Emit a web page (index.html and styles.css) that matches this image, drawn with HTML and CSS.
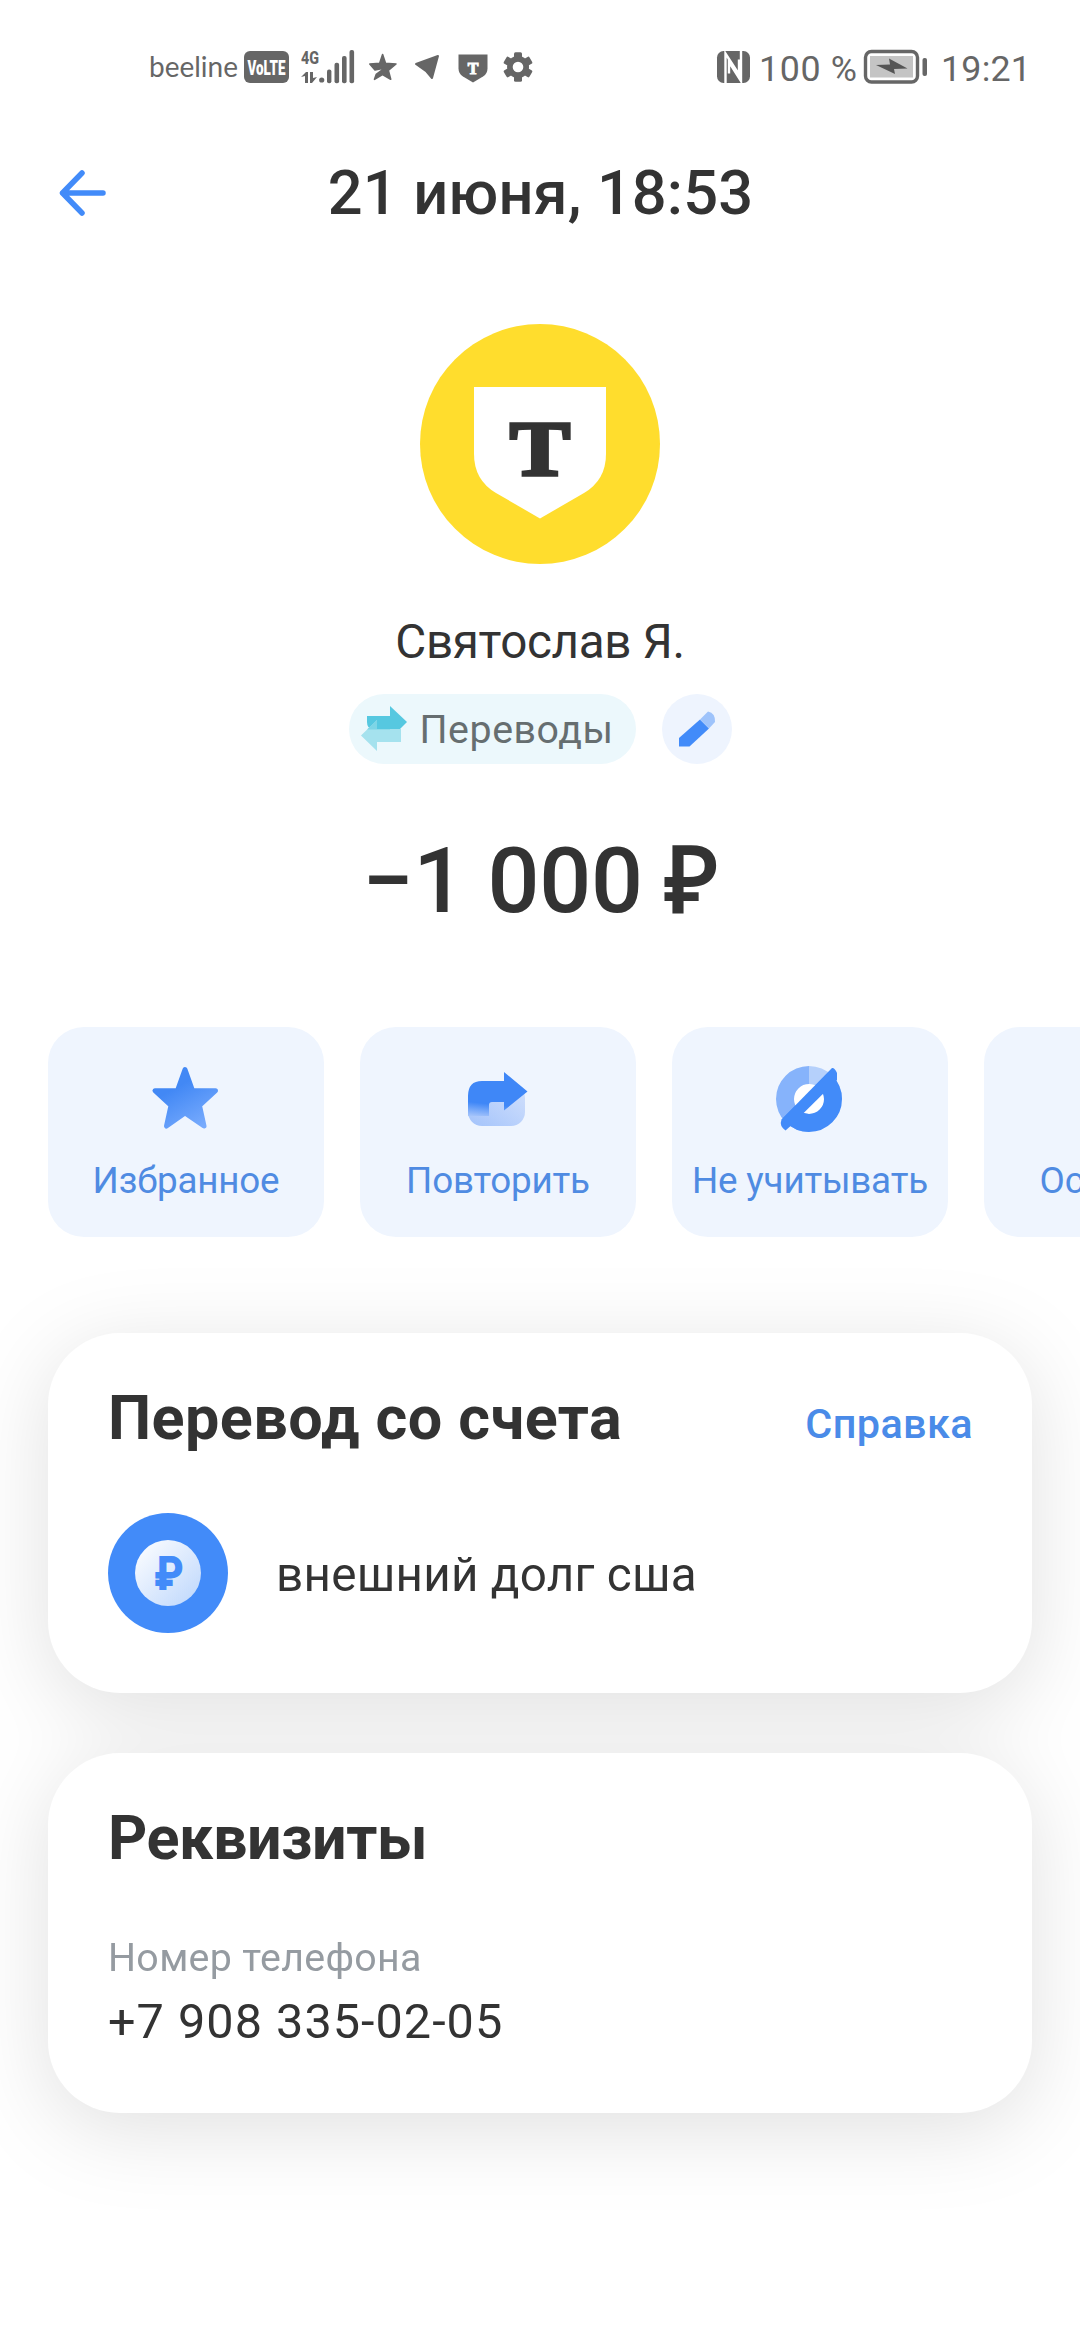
FILE: index.html
```html
<!DOCTYPE html>
<html lang="ru">
<head>
<meta charset="utf-8">
<title>Операция</title>
<link rel="stylesheet" href="styles.css">
</head>
<body>
<div class="status">
  <span class="carrier">beeline</span>
  <svg class="volte" width="45" height="32" viewBox="0 0 45 32">
    <rect width="45" height="32" rx="6" fill="#666"/>
    <text x="3.5" y="23.5" font-family="Roboto" font-weight="900" font-size="20" fill="#fff" textLength="38" lengthAdjust="spacingAndGlyphs">VoLTE</text>
  </svg>
  <svg class="signal" width="57" height="36" viewBox="298 48 57 36" fill="#666">
    <text x="300" y="63" font-family="Roboto" font-weight="800" font-size="19" textLength="18" lengthAdjust="spacingAndGlyphs">4G</text>
    <path d="M300 76l5-5h2v11h-3v-7zM309 71h3v6l4-1-5 6h-2z"/>
    <circle cx="320.7" cy="79" r="2.6"/>
    <rect x="326" y="68.5" width="4.4" height="13.7" rx="2"/>
    <rect x="333.5" y="61.7" width="4.6" height="20.5" rx="2"/>
    <rect x="341" y="55" width="4.6" height="27.2" rx="2"/>
    <rect x="348.5" y="49" width="4.6" height="33.2" rx="2"/>
  </svg>
  <svg class="fav" width="28" height="28" viewBox="368 52 28 28" fill="#666" stroke="#666" stroke-width="1.6" stroke-linejoin="round">
    <path d="M381.600 53.500L384.500 62.300L395 63L387.300 69.300L389.700 78.300L381.500 73.500L373.500 78.300L375.200 73.500L384 67L374 69L368.800 63L378.700 62.300Z"/>
  </svg>
  <svg class="plane" width="26" height="26" viewBox="413 54 26 26" fill="#666" stroke="#666" stroke-width="2" stroke-linejoin="round">
    <path d="M415 64L437 56L431 78L425.500 71.500Z"/>
  </svg>
  <svg class="bank" width="30" height="29" viewBox="0 0 30 29">
    <path fill="#666" d="M.5.5h29v14q0 5-4.500 8L15 28.500 5 22.500Q.5 19.500.5 14.500z"/>
    <text x="15" y="19.500" text-anchor="middle" font-family="Liberation Serif" font-weight="700" font-size="16" fill="#fff" stroke="#fff">T</text>
  </svg>
  <svg class="gear" width="30" height="30" viewBox="-15 -15 30 30">
    <g fill="#666">
      <circle r="11"/>
      <rect x="-4" y="-14.800" width="8" height="29.600" rx="1.500"/>
      <rect x="-4" y="-14.800" width="8" height="29.600" rx="1.500" transform="rotate(60)"/>
      <rect x="-4" y="-14.800" width="8" height="29.600" rx="1.500" transform="rotate(120)"/>
    </g>
    <circle r="5.300" fill="#fff"/>
  </svg>
  <span class="grow"></span>
  <svg class="nfc" width="33" height="32" viewBox="0 0 33 32">
    <rect width="33" height="32" rx="6.500" fill="#666"/>
    <path fill="none" stroke="#fff" stroke-width="2.400" d="M8.500 32V2.500L22 23.500V8.500"/>
    <path fill="none" stroke="#fff" stroke-width="2.400" d="M12 22.500V11L24 30V0"/>
  </svg>
  <span class="digits percent">100 %</span>
  <svg class="battery" width="64" height="34" viewBox="0 0 64 34">
    <rect x="1.500" y="1.500" width="52" height="30.500" rx="6" fill="#fff" stroke="#666" stroke-width="3.400"/>
    <rect x="6" y="6" width="43" height="21.500" fill="#c4c4c4"/>
    <path fill="#555" d="M12 15l14-.500-1-6 18.500 10-13.500.500 1 5z"/>
    <rect x="58.500" y="8" width="4.500" height="18" rx="2" fill="#666"/>
  </svg>
  <span class="digits clock">19:21</span>
</div>

<header class="header">
  <svg class="back" width="50" height="50" viewBox="0 0 50 50" fill="none" stroke="#428bf9" stroke-width="5.500" stroke-linecap="round" stroke-linejoin="round">
    <path d="M24 5L4.500 25L24 45M4.500 25H45"/>
  </svg>
  <h1>21 июня, 18:53</h1>
</header>

<main>
  <section class="hero">
    <svg class="avatar" width="240" height="240" viewBox="0 0 240 240">
      <circle cx="120" cy="120" r="120" fill="#ffdd2d"/>
      <path fill="#fff" d="M54 63H186V130Q186 156 164 169L120 194.500L76 169Q54 156 54 130Z"/>
      <text x="90" y="151" font-family="Liberation Serif" font-weight="700" font-size="78" fill="#333" stroke="#333" stroke-width="3.500" textLength="60" lengthAdjust="spacingAndGlyphs">T</text>
    </svg>
    <p class="name">Святослав Я.</p>
    <div class="tags">
      <div class="category">
        <svg width="48" height="48" viewBox="359 705 48 48">
          <path fill="#56c8e0" d="M366 716H389V706L406 722L389 739V729H372Q366 729 366 722Z"/>
          <path fill="#a5e2ee" d="M360 735.500L376 720V729H400V742H376V751Z"/>
          <path fill="#7cd5e6" d="M366 729.500L376 720V729H389V729.500Z"/>
        </svg>
        <span>Переводы</span>
      </div>
      <div class="edit">
        <svg width="40" height="40" viewBox="676 709 40 40">
          <path fill="#428bf9" d="M678 738L699 719.500L708 728.500L688.500 746.500H678Z"/>
          <path fill="#9ec3fb" d="M699 719.500L707 711.500Q714.500 713 714 722L708 728.500Z"/>
        </svg>
      </div>
    </div>
    <p class="amount">−1 000 <span class="currency">₽</span></p>
  </section>

  <nav class="actions">
    <div class="action">
      <svg width="72" height="72" viewBox="150 1061 72 72">
        <defs><linearGradient id="star" x1=".2" y1="0" x2=".8" y2="1"><stop offset=".3" stop-color="#4288f5"/><stop offset="1" stop-color="#78abfd"/></linearGradient></defs>
        <path fill="url(#star)" stroke="url(#star)" stroke-width="5" stroke-linejoin="round" d="M185 1069.500L192.500 1090.500L215.500 1090.700L199.500 1105.500L204 1126L185 1113L166.500 1126L171 1105.500L155 1090.700L177.500 1090.500Z"/>
      </svg>
      <span>Избранное</span>
    </div>
    <div class="action">
      <svg width="72" height="72" viewBox="462 1061 72 72">
        <defs>
          <linearGradient id="pale" x1="0" y1="1" x2="1" y2="0"><stop offset="0" stop-color="#a3c3fb"/><stop offset="1" stop-color="#d3e1fc"/></linearGradient>
          <linearGradient id="fade" x1=".15" y1="0" x2="0" y2="1"><stop offset=".68" stop-color="#3f87f7"/><stop offset="1" stop-color="#a8c6fb"/></linearGradient>
        </defs>
        <rect x="468" y="1084" width="57" height="42" rx="14" fill="url(#pale)"/>
        <path fill="url(#fade)" d="M468 1096Q468 1081 482 1081H504V1072L527.500 1091.500L504 1110.500V1102H492Q489 1102 489 1105V1116H468Z"/>
      </svg>
      <span>Повторить</span>
    </div>
    <div class="action">
      <svg width="72" height="72" viewBox="774 1061 72 72">
        <defs><clipPath id="lower"><path d="M769 1132L841 1060H860V1140H769Z"/></clipPath></defs>
        <circle cx="809" cy="1099" r="15" fill="#fff"/>
        <path fill="#86b3fb" d="M809 1066A33 33 0 0 0 809 1132V1114A15 15 0 0 1 809 1084Z"/>
        <path fill="#b5d0fb" d="M809 1066A33 33 0 0 1 842 1099L824 1099A15 15 0 0 0 809 1084Z"/>
        <circle cx="809" cy="1099" r="24" fill="none" stroke="#428bf9" stroke-width="18" clip-path="url(#lower)"/>
        <path fill="#428bf9" d="M781.500 1119.500L832 1068Q834.500 1067.500 837 1073V1080L790 1126.500L785.500 1130.500Q779 1126 781.500 1119.500Z"/>
      </svg>
      <span>Не учитывать</span>
    </div>
    <div class="action">
      <i class="blank"></i>
      <span>Оспорить</span>
    </div>
  </nav>

  <div class="cards">
    <section class="card">
      <div class="card-head">
        <h2 class="from">Перевод со счета</h2>
        <a class="link">Справка</a>
      </div>
      <div class="account">
        <svg width="120" height="120" viewBox="0 0 120 120">
          <defs><linearGradient id="coin" x1="0" y1="0" x2="1" y2="1"><stop offset="0" stop-color="#fff"/><stop offset="1" stop-color="#bcd6fc"/></linearGradient></defs>
          <circle cx="60" cy="60" r="60" fill="#428bf9"/>
          <circle cx="60" cy="60" r="33" fill="url(#coin)"/>
          <text x="46" y="77" font-family="Roboto" font-weight="900" font-size="49" fill="#428bf9" textLength="30" lengthAdjust="spacingAndGlyphs">₽</text>
        </svg>
        <span>внешний долг сша</span>
      </div>
    </section>
    <section class="card">
      <h2 class="details">Реквизиты</h2>
      <p class="label">Номер телефона</p>
      <p class="phone">+7 908 335-02-05</p>
    </section>
  </div>
</main>
</body>
</html>
```

FILE: styles.css
```css
* {
  box-sizing: border-box;
  margin: 0;
  padding: 0;
}

body {
  width: 1080px;
  height: 2340px;
  overflow: hidden;
  background: #fff;
  color: #333;
  font-family: Roboto, sans-serif;
}

svg {
  display: block;
  flex: none;
  overflow: visible;
}

/* Status bar */
.status {
  display: flex;
  align-items: center;
  height: 133px;
  padding: 0 52px 0 149px;
  color: #666;
  white-space: nowrap;
}

.carrier {
  width: 95px;
  font: 400 28px/34px Lato, sans-serif;
  padding-bottom: 2px;
}

.volte { margin-right: 10px; }
.signal { margin-right: 13px; }
.fav { margin-right: 17px; }
.plane { margin-right: 18px; }
.bank { margin: 3px 15px 0 0; }
.grow { flex: 1; }
.nfc { margin-right: 9px; }

.digits {
  padding-top: 4px;
  font-size: 35.8px;
  line-height: 42px;
}

.percent {
  width: 105px;
  letter-spacing: 0.6px;
}

.battery { margin-right: 13px; }

.clock {
  width: 87px;
  letter-spacing: 0.2px;
}

/* Header */
.header {
  display: grid;
  grid-template-columns: 108px 1fr 107px;
  align-items: center;
  height: 119px;
}

.back { margin-left: 58px; }

h1 {
  text-align: center;
  font-weight: 500;
  font-size: 61.4px;
  line-height: 72px;
  letter-spacing: 0.1px;
}

/* Summary */
.hero {
  display: flex;
  flex-direction: column;
  align-items: center;
  padding-top: 72px;
}

.name {
  margin-top: 50px;
  font-size: 47.6px;
  line-height: 56px;
  letter-spacing: -0.35px;
}

.tags {
  display: flex;
  gap: 26px;
  margin-top: 24px;
}

.category {
  display: flex;
  align-items: center;
  gap: 12px;
  width: 287px;
  height: 70px;
  padding-left: 11px;
  border-radius: 35px;
  background: #ecf8fc;
  color: #666e70;
  font-size: 39.3px;
  line-height: 46px;
  letter-spacing: 0.57px;
}

.category span { padding-top: 2px; }

.edit {
  display: grid;
  place-items: center;
  width: 70px;
  height: 70px;
  border-radius: 50%;
  background: #eef4fe;
}

.amount {
  height: 108px;
  margin-top: 63px;
  font-weight: 500;
  font-size: 91.5px;
  line-height: 108px;
  letter-spacing: -0.3px;
}

.currency {
  font-family: "Open Sans", sans-serif;
  font-weight: 600;
  line-height: 1;
}

/* Actions */
.actions {
  display: flex;
  gap: 36px;
  margin: 92px 0 0 48px;
  overflow: hidden;
}

.action {
  display: flex;
  flex: none;
  flex-direction: column;
  align-items: center;
  width: 276px;
  height: 210px;
  padding-top: 34px;
  border-radius: 36px;
  background: #eff5fe;
  color: #4f8be2;
  font-size: 36.8px;
  line-height: 44px;
  letter-spacing: -0.2px;
  white-space: nowrap;
}

.action span { margin-top: 26px; }

.blank {
  width: 72px;
  height: 72px;
}

/* Cards */
.cards {
  display: flex;
  flex-direction: column;
  gap: 60px;
  margin: 96px 48px 0;
  filter: drop-shadow(0 16px 42px rgba(0, 0, 0, 0.12));
}

.card {
  height: 360px;
  padding: 49px 60px 0;
  border-radius: 72px;
  background: #fff;
}

.card-head {
  display: flex;
  justify-content: space-between;
}

h2 {
  font-weight: 700;
  font-size: 61.1px;
  line-height: 72px;
}

.from { letter-spacing: 0.42px; }
.details { letter-spacing: -0.47px; }

.link {
  margin-right: -1px;
  padding-top: 18px;
  color: #4a8be8;
  font-size: 41.4px;
  font-weight: 500;
  line-height: 48px;
  letter-spacing: 0.4px;
}

.account {
  display: flex;
  align-items: center;
  gap: 48px;
  margin-top: 59px;
  font-size: 47.6px;
  line-height: 56px;
  letter-spacing: 0.26px;
}

.account span { padding-top: 3px; }

.label {
  margin-top: 60px;
  color: #959ba1;
  font-size: 39.3px;
  line-height: 48px;
  letter-spacing: 0.34px;
}

.phone {
  margin-top: 10px;
  font-size: 48.6px;
  line-height: 60px;
  letter-spacing: 1.02px;
}
```
